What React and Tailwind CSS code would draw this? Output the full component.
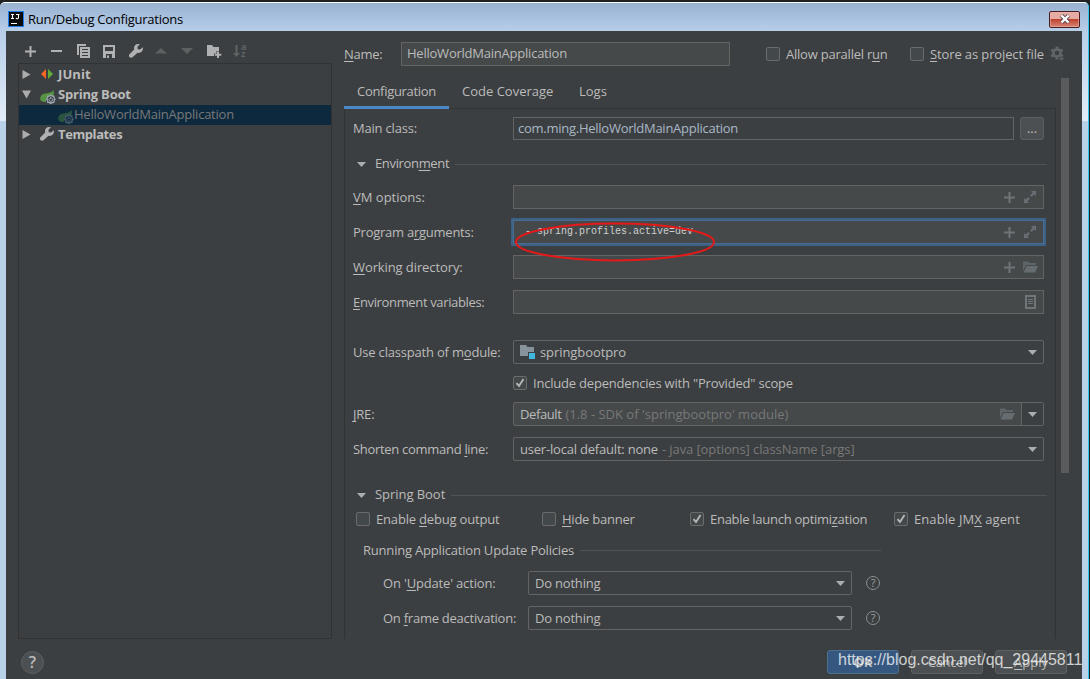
import clsx from 'clsx'

const ARROWS = {
  down: 'M0 0h9L4.5 5z',
  up: 'M0 5.5h12L6 0z',
}

function Caret({ className }) {
  return (
    <svg width="9" height="5" viewBox="0 0 9 5" className={clsx('shrink-0', className)}>
      <path d={ARROWS.down} fill="#a9aeb2" />
    </svg>
  )
}

function PlusIcon({ size = 11, color = '#afb1b3', weight = 2 }) {
  return (
    <svg width={size} height={size} viewBox="0 0 11 11" className="shrink-0">
      <path d="M5.5 0v11M0 5.5h11" stroke={color} strokeWidth={weight} />
    </svg>
  )
}

function WrenchIcon() {
  return (
    <svg width="14" height="14" viewBox="0 0 14 14" className="shrink-0">
      <path
        d="M13.6 3.2 11.2 5.5 8.7 5.2 8.4 2.8 10.8.4C9.2-.3 7.3 0 6.1 1.3 5 2.4 4.8 4 5.2 5.4L.7 9.9c-1 .9-1 2.3-.2 3.2.9.9 2.4.9 3.3 0L8.5 8.7c1.4.5 3 .2 4.100-.9 1.300-1.200 1.600-3 1-4.600z"
        fill="#afb1b3"
      />
    </svg>
  )
}

function FolderOpenIcon() {
  return (
    <svg width="15" height="12" viewBox="0 0 15 12" className="shrink-0">
      <path d="M0 10V.5h5L6.5 2H13v2H3.2z" fill="#5e6568" />
      <path d="M3.700 5H15l-3 6.500H.5z" fill="#666d71" />
    </svg>
  )
}

function ExpandIcon() {
  return (
    <svg width="12" height="12" viewBox="0 0 12 12" className="shrink-0">
      <path d="M7 0h5v5l-1.700-1.700-2.600 2.600-1.600-1.600 2.600-2.600zM5 12H0V7l1.700 1.700 2.600-2.600 1.600 1.600-2.600 2.600z" fill="#687075" />
      <path d="M4.500 4.500l3 3" stroke="#45494a" strokeWidth="1.500" />
    </svg>
  )
}

function DocIcon() {
  return (
    <svg width="11" height="14" viewBox="0 0 11 14" className="shrink-0">
      <rect x="1" y="1" width="9" height="12" fill="none" stroke="#6e767a" strokeWidth="2" />
      <path d="M3 4.500h5M3 6.500h5M3 8.500h5" stroke="#6e767a" />
    </svg>
  )
}

function SpringIcon({ dim }) {
  return (
    <svg width="16" height="14" viewBox="0 0 16 14" className={clsx('shrink-0', dim && 'opacity-40')}>
      <path d="M13.500 0c.5 3 .5 5.500-.8 6.500C8 5 5.500 8 6 12 3.500 12 .8 11.500.3 9.500-.3 6 2 4 5.500 3.500 9 3 12 2.500 13.500 0z" fill="#569443" />
      <circle cx="10.800" cy="9.300" r="3.700" fill="none" stroke="#9aa7b0" strokeWidth="1.300" />
      <path d="M10.800 4.400v1.200M6 9.300h1.200M14.400 9.300h1.200M10.800 12.800V14M7.300 5.800l1 1M14.300 5.800l-1 1M7.300 12.800l1-1M14.300 12.800l-1-1" stroke="#9aa7b0" strokeWidth="1.300" />
      <path d="M10.800 7v2.300" stroke="#9aa7b0" strokeWidth="1.200" />
      <path d="M9.300 8.400a1.900 1.900 0 1 0 3 0" fill="none" stroke="#9aa7b0" strokeWidth="1" />
    </svg>
  )
}

function Toolbar() {
  return (
    <div className="flex items-center h-[20px] pl-[7px]">
      <div className="w-[26px]"><PlusIcon /></div>
      <div className="w-[26px]"><div className="w-[11px] h-[2px] bg-[#afb1b3]" /></div>
      <div className="w-[26px]">
        <svg width="13" height="14" viewBox="0 0 13 14">
          <path d="M0 0h9v2H2v9H0z" fill="#afb1b3" />
          <path d="M3 3h10v11H3z" fill="#afb1b3" />
          <path d="M5 5.500h6M5 8.500h6M5 11.500h6" stroke="#3c3f41" />
        </svg>
      </div>
      <div className="w-[26px]">
        <svg width="12" height="13" viewBox="0 0 12 13">
          <path d="M0 0h12v13H0z" fill="#afb1b3" />
          <path d="M2 2h8v4H2zM3 9h6v4H3z" fill="#3c3f41" />
          <path d="M4 10.500h2V13H4z" fill="#afb1b3" />
        </svg>
      </div>
      <div className="w-[26px]"><WrenchIcon /></div>
      <div className="w-[26px]">
        <svg width="12" height="6" viewBox="0 0 12 6"><path d={ARROWS.up} fill="#5e6162" /></svg>
      </div>
      <div className="w-[26px]">
        <svg width="12" height="6" viewBox="0 0 12 6"><path d="M0 0h12L6 6z" fill="#5e6162" /></svg>
      </div>
      <div className="w-[26px]">
        <svg width="15" height="13" viewBox="0 0 15 13">
          <path d="M0 0h5l1.500 2H12v4H9.500v2.500H7V11H0z" fill="#afb1b3" />
          <path d="M11 6.500V13M7.800 9.800h6.500" stroke="#afb1b3" strokeWidth="2" />
        </svg>
      </div>
      <div className="flex items-center">
        <svg width="7" height="12" viewBox="0 0 7 12">
          <path d="M2.500 0h2v8H7l-3.500 4L0 8h2.500z" fill="#606365" />
        </svg>
        <div className="flex flex-col pl-[1px] pb-[2px] text-[9px] leading-[7px] font-bold text-[#606365]">
          <span>a</span>
          <span>z</span>
        </div>
      </div>
    </div>
  )
}

function TreeArrow({ open }) {
  return (
    <svg width="9" height="9" viewBox="0 0 9 9" className="shrink-0">
      <path d={open ? 'M0 .5h9L4.500 8.500z' : 'M.5 0v9L8.500 4.500z'} fill="#adadad" />
    </svg>
  )
}

function Tree() {
  return (
    <div className="w-[314px] h-[576px] border border-[#323232] font-bold text-[#bbbbbb]">
      <div className="flex items-center h-[20px] pl-[3px]">
        <TreeArrow />
        <svg width="12" height="10" viewBox="0 0 12 10" className="ml-[10px] mr-[5px]">
          <path d="M5 0v10L0 5z" fill="#f26522" />
          <path d="M7 0v10l5-5z" fill="#5fad37" />
        </svg>
        <span className="tracking-[0.1px]">JUnit</span>
      </div>
      <div className="flex items-center h-[20px] pl-[3px]">
        <TreeArrow open />
        <div className="pl-[9px] pr-[2px] pt-[5px]"><SpringIcon /></div>
        <span className="tracking-[-0.2px]">Spring Boot</span>
      </div>
      <div className="flex items-center h-[20px] mt-px pl-[39px] bg-[#0d293e] font-normal text-[#787878]">
        <div className="pt-[3px]"><SpringIcon dim /></div>
        <span className="pb-[2px] tracking-[-0.23px]">HelloWorldMainApplication</span>
      </div>
      <div className="flex items-center h-[20px] -mt-px pl-[3px]">
        <TreeArrow />
        <div className="pl-[9px] pr-[4px]"><WrenchIcon /></div>
        <span className="tracking-[-0.4px]">Templates</span>
      </div>
    </div>
  )
}

function Checkbox({ checked, className, children }) {
  return (
    <label className={clsx('flex items-center gap-[6px] whitespace-nowrap', className)}>
      <span className="w-[14px] h-[14px] border border-[#6b6b6b] rounded-[2px] bg-[#43494a] shrink-0">
        {checked && (
          <svg width="12" height="12" viewBox="0 0 12 12">
            <path d="M2.500 6.200 5 9l4.500-7" fill="none" stroke="#b4b6b7" strokeWidth="1.900" />
          </svg>
        )}
      </span>
      <span>{children}</span>
    </label>
  )
}

function FieldRow({ label, className, children }) {
  return (
    <div className={clsx('flex items-center h-[24px] pl-[8px] pr-[11px]', className)}>
      <div className="w-[160px] shrink-0 whitespace-nowrap">{label}</div>
      {children}
    </div>
  )
}

function Field({ focused, children }) {
  return (
    <div
      className={clsx(
        'flex flex-1 items-center justify-end h-[24px] border bg-[#45494a] pr-[7px]',
        focused ? 'border-[#466d94] ring-2 ring-[#3d6185]' : 'border-[#646464]'
      )}
    >
      {children}
    </div>
  )
}

function Combo({ className, children }) {
  return (
    <div className={clsx('flex items-center h-[24px] border border-[#646464] rounded-[2px] pl-[6px] pr-[6px]', className)}>
      {children}
      <Caret className="ml-auto" />
    </div>
  )
}

function Section({ className, children }) {
  return (
    <div className={clsx('flex items-center h-[20px] pl-[12px] pr-[8px]', className)}>
      <Caret />
      <span className="pl-[9px] pr-[6px] pb-[2px]">{children}</span>
      <div className="flex-1 h-px bg-[#515355]" />
    </div>
  )
}

function HelpMark() {
  return (
    <div className="w-[14px] h-[14px] ml-[14px] border border-[#8a8f92] rounded-full text-[11px] leading-[12px] text-center text-[#9a9fa2]">?</div>
  )
}

function Configuration() {
  return (
    <div className="w-[712px] h-[531px] -mt-px border-x border-t border-[#323232] overflow-hidden">
      <FieldRow className="mt-[8px]" label={<div className="pb-[2px] tracking-[-0.2px]">Main class:</div>}>
        <div className="self-start w-[501px] h-[23px] border border-[#646464] px-[4px] leading-[20px] text-[#a9b7c6]">
          <span className="tracking-[-0.26px]">com.ming.HelloWorldMainApplication</span>
        </div>
        <div className="self-start w-[24px] h-[23px] ml-[6px] border border-[#5e6060] rounded-[3px] bg-[#4c5052] text-center leading-[20px]">...</div>
      </FieldRow>

      <Section className="mt-[13px]"><span className="tracking-[-0.35px]">Environ<u>m</u>ent</span></Section>
      <FieldRow className="mt-[11px]" label={<span><u>V</u>M options:</span>}>
        <Field>
          <PlusIcon color="#6e7477" />
          <div className="w-[9px]" />
          <ExpandIcon />
        </Field>
      </FieldRow>
      <FieldRow className="mt-[11px]" label={<span className="tracking-[-0.25px]">Program a<u>r</u>guments:</span>}>
        <Field focused>
          <span className="mr-auto pl-[11px] font-['Liberation_Mono',monospace] text-[10px] leading-[14px] text-[#cfcfcf]">--spring.profiles.active=dev</span>
          <PlusIcon color="#6e7477" />
          <div className="w-[9px]" />
          <ExpandIcon />
        </Field>
      </FieldRow>
      <FieldRow className="mt-[11px]" label={<span className="tracking-[-0.1px]"><u>W</u>orking directory:</span>}>
        <Field>
          <PlusIcon color="#6e7477" />
          <div className="w-[8px]" />
          <div className="-mr-[2px]"><FolderOpenIcon /></div>
        </Field>
      </FieldRow>
      <FieldRow className="mt-[11px]" label={<span className="tracking-[-0.35px]"><u>E</u>nvironment variables:</span>}>
        <Field><DocIcon /></Field>
      </FieldRow>

      <FieldRow className="mt-[26px]" label={<span className="tracking-[-0.19px]">Use classpath of m<u>o</u>dule:</span>}>
        <Combo className="flex-1">
          <svg width="16" height="14" viewBox="0 0 16 14">
            <path d="M0 0h6l1.500 2H14v5H8v4H0z" fill="#87939a" />
            <path d="M9 8h6v6H9z" fill="#40b6e0" />
          </svg>
          <span className="pl-[4px] tracking-[-0.08px]">springbootpro</span>
        </Combo>
      </FieldRow>
      <FieldRow className="mt-[7px]">
        <Checkbox checked><span className="tracking-[-0.2px]">Include dependencies with "Provided" scope</span></Checkbox>
      </FieldRow>
      <FieldRow className="mt-[7px]" label={<span className="tracking-[-0.2px]"><u>J</u>RE:</span>}>
        <div className="flex flex-1 items-center h-[24px] border border-[#646464] rounded-[2px] bg-[#45494a]">
          <span className="pl-[6px] tracking-[-0.4px]">Default</span>
          <span className="pl-[4px] text-[#787878]">(1.8 - SDK of 'springbootpro' module)</span>
          <div className="ml-auto mr-[6px]"><FolderOpenIcon /></div>
          <div className="flex items-center h-full w-[22px] pl-[6px] border-l border-[#646464] bg-[#3c3f41]"><Caret /></div>
        </div>
      </FieldRow>
      <FieldRow className="mt-[11px]" label={<span className="tracking-[-0.3px]">Shorten command <u>l</u>ine:</span>}>
        <Combo className="flex-1">
          <span className="tracking-[-0.2px]">user-local default: none</span>
          <span className="pl-[4px] tracking-[-0.1px] text-[#787878]">- java [options] className [args]</span>
        </Combo>
      </FieldRow>

      <Section className="mt-[24px]"><span className="tracking-[-0.05px]">Sprin<u>g</u> Boot</span></Section>
      <div className="flex items-center h-[20px] mt-[4px] pl-[11px]">
        <Checkbox className="w-[186px]"><span className="tracking-[-0.18px]">Enable <u>d</u>ebug output</span></Checkbox>
        <Checkbox className="w-[148px]"><span className="tracking-[-0.25px]"><u>H</u>ide banner</span></Checkbox>
        <Checkbox className="w-[204px]" checked><span className="tracking-[-0.28px]">Enable launch optimi<u>z</u>ation</span></Checkbox>
        <Checkbox checked><span className="tracking-[0.08px]">Enable JM<u>X</u> agent</span></Checkbox>
      </div>
      <div className="flex items-center h-[20px] mt-[11px] pl-[18px] w-[536px]">
        <span className="pr-[6px] tracking-[-0.2px] whitespace-nowrap">Running Application Update Policies</span>
        <div className="flex-1 h-px bg-[#515355]" />
      </div>
      <div className="flex items-center h-[24px] mt-[11px] pl-[38px]">
        <div className="w-[145px] tracking-[-0.17px]">On '<u>U</u>pdate' action:</div>
        <Combo className="w-[324px]"><span className="tracking-[-0.2px]">Do nothing</span></Combo>
        <HelpMark />
      </div>
      <div className="flex items-center h-[24px] mt-[11px] pl-[38px]">
        <div className="w-[145px] tracking-[-0.25px]">On <u>f</u>rame deactivation:</div>
        <Combo className="w-[324px]"><span className="tracking-[-0.2px]">Do nothing</span></Combo>
        <HelpMark />
      </div>
    </div>
  )
}

function TitleBar() {
  return (
    <div className="flex items-center h-[28px] pl-[8px] pr-[8px] bg-linear-to-b from-[#98b2d1] to-[#b7cee9] text-black">
      <svg width="16" height="16" viewBox="0 0 16 16" className="mt-[4px]">
        <rect width="16" height="16" fill="#1a7df0" />
        <rect x="1" y="1" width="14" height="14" fill="#0c0c0c" />
        <path d="M3 3.500h3M4.500 3.500v4M3 7.500h3M8 3.500h3.500M10.500 3v3.500a1.300 1.300 0 0 1-2.500.5M3 12.500h6" fill="none" stroke="#fff" strokeWidth="1.100" />
      </svg>
      <span className="pl-[4px] pt-[4px] tracking-[-0.25px]">Run/Debug Configurations</span>
      <button className="flex items-center justify-center ml-auto mt-[4px] w-[31px] h-[17px] rounded-[2px] border border-[#4a1c22] bg-linear-to-b from-[#e6aca4] from-45% via-[#bd432f] via-50% to-[#d88474] inset-ring inset-ring-[#e8b3ab]/60">
        <svg width="12" height="10" viewBox="0 0 12 10">
          <path d="M2.500 1.500l7 7M9.500 1.500l-7 7" stroke="#5b4a52" strokeWidth="4.200" />
          <path d="M2.500 1.500l7 7M9.500 1.500l-7 7" stroke="#fff" strokeWidth="2.400" />
        </svg>
      </button>
    </div>
  )
}

function RunConfig() {
  return (
    <div className="w-[738px] pt-[10px]">
      <div className="flex items-center h-[25px]">
        <span className="w-[57px] shrink-0 tracking-[-0.25px]"><u>N</u>ame:</span>
        <div className="w-[329px] h-[24px] shrink-0 border border-[#646464] bg-[#45494a] px-[5px] leading-[21px]">
          <span className="tracking-[-0.23px]">HelloWorldMainApplication</span>
        </div>
        <Checkbox className="ml-[36px] w-[144px] shrink-0"><span className="tracking-[-0.22px]">Allow parallel r<u>u</u>n</span></Checkbox>
        <Checkbox><span className="tracking-[-0.12px]"><u>S</u>tore as project file</span></Checkbox>
        <svg width="15" height="15" viewBox="0 0 15 15" className="ml-[6px] shrink-0">
          <circle cx="7" cy="7" r="3.600" fill="none" stroke="#616466" strokeWidth="2.600" />
          <path d="M7 .5v2.500M7 11v2.500M1.300 3.800l2.200 1.200M10.500 9l2.200 1.200M1.300 10.200l2.200-1.200M10.500 5l2.200-1.200" stroke="#616466" strokeWidth="2.800" />
          <path d="M8 11.500h7L11.500 15z" fill="#616466" stroke="#3c3f41" strokeWidth=".6" />
        </svg>
      </div>
      <div className="flex">
        <div>
          <div className="flex h-[43px] pt-[10px]">
            <div className="relative z-10 w-[105px] h-[33px] pl-[13px] pt-[6px] border-b-3 border-[#4a88c7] tracking-[-0.3px]">Configuration</div>
            <div className="w-[117px] pl-[13px] pt-[6px]">Code Coverage</div>
            <div className="pl-[13px] pt-[6px]">Logs</div>
          </div>
          <Configuration />
        </div>
        <div className="w-[8px] h-[395px] ml-[5px] mt-[12px] bg-[#595b5d]" />
      </div>
    </div>
  )
}

export default function App() {
  return (
    <div className="relative flex flex-col w-[1090px] h-[679px] overflow-hidden bg-[#202122] pt-[2px] font-['Open_Sans',sans-serif] text-[13px] leading-[18px] text-[#bbbbbb] [&_u]:underline-offset-2">
      <div className="flex flex-col flex-1 w-[1089px] rounded-t-[5px] overflow-hidden border-t border-t-white border-r border-r-[#34c6ea] bg-[#bad1ea]">
        <TitleBar />
        <div className="flex flex-1">
          <div className="w-[6px] h-[90px] bg-linear-to-b from-[#b7cee9] to-[#e2ecf7]" />
          <div className="w-[1076px] bg-[#3c3f41]">
            <div className="flex h-[608px]">
              <div className="pl-[12px] pt-[10px] w-[338px] shrink-0">
                <Toolbar />
                <div className="h-[2px]" />
                <Tree />
              </div>
              <RunConfig />
            </div>
            <div className="flex items-center h-[24px] mt-[11px] pl-[15px] pr-[15px]">
              <div className="w-[23px] h-[23px] rounded-full border border-[#5e6060] bg-[#4c5052] text-center text-[16px] leading-[21px] font-semibold">?</div>
              <div className="flex gap-[12px] ml-auto text-center leading-[22px]">
                <div className="w-[72px] h-[24px] rounded-[3px] border border-[#4c708c] bg-[#365880] font-bold">OK</div>
                <div className="w-[72px] h-[24px] rounded-[3px] border border-[#5e6060] bg-[#4c5052] tracking-[-0.3px]">Cancel</div>
                <div className="w-[72px] h-[24px] rounded-[3px] border border-[#5e6060] bg-[#4c5052]"><u>A</u>pply</div>
              </div>
            </div>
          </div>
          <div className="w-[6px] h-[90px] bg-linear-to-b from-[#b7cee9] to-[#e2ecf7]" />
        </div>
      </div>

      {/* red marker around the program arguments */}
      <svg width="202" height="42" viewBox="0 0 202 42" className="absolute left-[514px] top-[221px]">
        <ellipse cx="101" cy="21" rx="99" ry="18.500" fill="none" stroke="#e61919" strokeWidth="2" />
      </svg>
      <div className="absolute left-[838px] top-[650px] font-['Liberation_Sans',sans-serif] text-[16px] leading-[20px] text-white/75">https://blog.csdn.net/qq_29445811</div>
    </div>
  )
}
